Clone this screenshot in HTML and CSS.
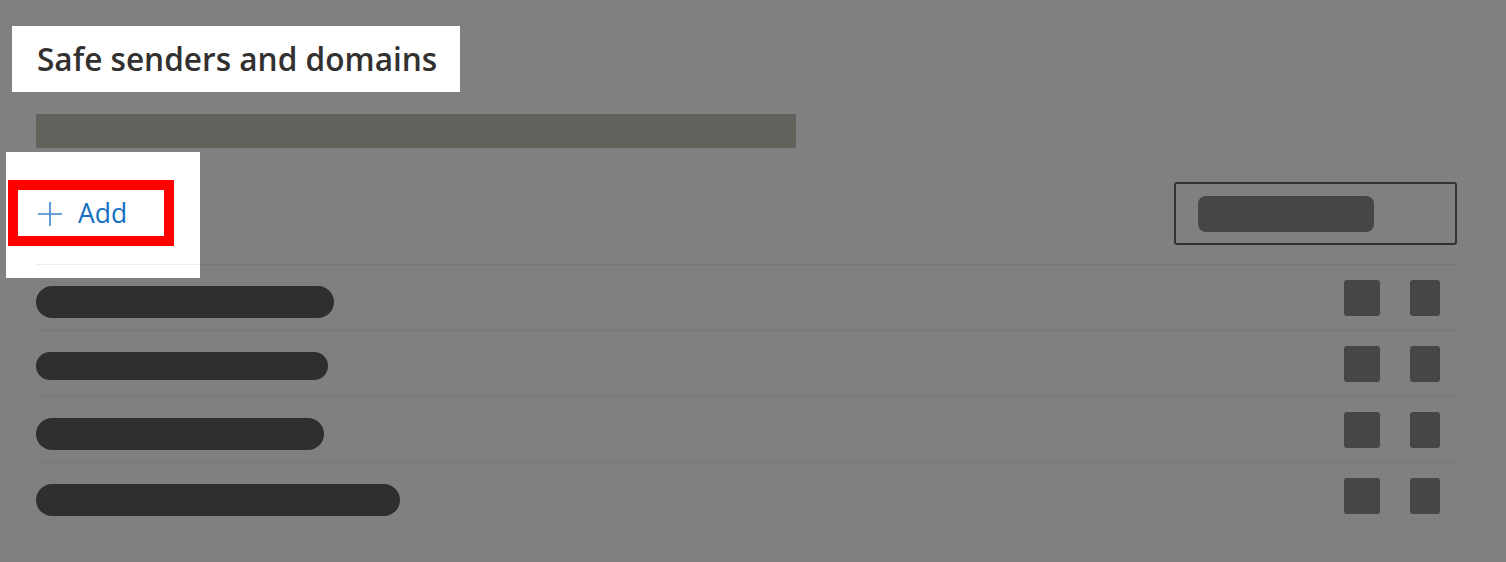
FILE: index.html
```html
<!DOCTYPE html>
<html>
<head>
  <link rel="stylesheet" href="styles.css">
  <title>Safe senders and domains</title>
</head>
<body>

  <div class="page">
    <div class="title-spot">
      <h2 class="title">Safe senders and domains</h2>
    </div>

    <div class="intro"></div>

    <div class="toolbar">
      <div class="add-spot">
        <div class="add-frame">
          <button class="add-btn">
            <svg class="plus" width="24" height="26" viewBox="0 0 24 26">
              <path d="M12 1v24M0 13h24" stroke="currentColor" stroke-width="1.6" fill="none"/>
            </svg>
            <span>Add</span>
          </button>
        </div>
      </div>

      <div class="search">
        <div class="search-fill"></div>
      </div>
    </div>

    <div class="list">
      <div class="row">
        <div class="name" style="width: 298px"></div>
        <div class="actions"><span class="act wide"></span><span class="act"></span></div>
      </div>
      <div class="row">
        <div class="name short" style="width: 292px"></div>
        <div class="actions"><span class="act wide"></span><span class="act"></span></div>
      </div>
      <div class="row">
        <div class="name" style="width: 288px"></div>
        <div class="actions"><span class="act wide"></span><span class="act"></span></div>
      </div>
      <div class="row">
        <div class="name" style="width: 364px"></div>
        <div class="actions"><span class="act wide"></span><span class="act"></span></div>
      </div>
    </div>
  </div>

</body>
</html>
```

FILE: styles.css
```css
body {
  margin: 0;
  background-color: #808080;
  font-family: 'Open Sans', 'Noto Sans', sans-serif;
  color: #323130;
}

.page {
  padding: 26px 48px 0 36px;
}

.title-spot {
  display: inline-block;
  margin-left: -24px;
  padding: 0 23px 0 25px;
  background-color: #fff;
  height: 66px;
}

.title {
  margin: 0;
  font-size: 31.6px;
  font-weight: 600;
  line-height: 66px;
  color: #323130;
}

.intro {
  margin-top: 22px;
  width: 760px;
  height: 34px;
  background-color: #62625c;
}

.toolbar {
  display: flex;
  justify-content: space-between;
  align-items: flex-start;
  height: 116px;
}

.add-spot {
  margin: 4px 0 0 -30px;
  padding: 28px 26px 32px 2px;
  background-color: #fff;
}

.add-frame {
  border: 10px solid #ff0000;
  width: 146px;
  height: 46px;
}

.add-btn {
  display: flex;
  align-items: center;
  gap: 16px;
  height: 46px;
  padding: 0 0 0 20px;
  border: none;
  background: none;
  color: #1570c4;
  font-family: 'Open Sans', 'Noto Sans', sans-serif;
  font-size: 26.5px;
  cursor: pointer;
}

.plus {
  color: #3d86cc;
  margin-top: 2px;
}

.search {
  display: flex;
  align-items: center;
  box-sizing: border-box;
  margin-top: 34px;
  margin-right: 1px;
  width: 283px;
  height: 63px;
  padding: 0 22px;
  border: 2px solid #333;
  border-radius: 3px;
}

.search-fill {
  width: 176px;
  height: 36px;
  border-radius: 8px;
  background-color: #454648;
}

.list {
  position: relative;
}

.row {
  display: flex;
  justify-content: space-between;
  align-items: flex-start;
  box-sizing: border-box;
  height: 66px;
  padding: 15px 18px 0 0;
  border-top: 1px solid rgba(0, 0, 0, 0.07);
}

.name {
  margin-top: 6px;
  height: 32px;
  border-radius: 16px;
  background-color: #2e3030;
}

.name.short {
  height: 28px;
  border-radius: 14px;
}

.actions {
  display: flex;
  gap: 30px;
}

.act {
  width: 30px;
  height: 36px;
  border-radius: 3px;
  background-color: #454648;
}

.act.wide {
  width: 36px;
}
```
